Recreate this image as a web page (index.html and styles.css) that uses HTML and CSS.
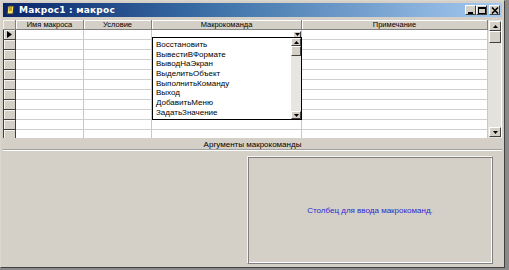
FILE: index.html
```html
<!DOCTYPE html>
<html>
<head>
<meta charset="utf-8">
<link rel="stylesheet" href="styles.css">
</head>
<body>
<div class="window">
  <div class="titlebar">
    <svg class="ticon" width="9" height="10" viewBox="0 0 9 10">
      <path d="M2 1 L8 1 L7 9 L1 9 Z" fill="#f8e060" stroke="#303030" stroke-width="1"/>
      <path d="M3 3 L6 3 M3 5 L6 5" stroke="#806000" stroke-width="1"/>
    </svg>
    <span class="ttext">Макрос1 : макрос</span>
    <div class="tbtns">
      <span class="tbtn"><svg width="8" height="7" viewBox="0 0 8 7"><rect x="1" y="5" width="5" height="2" fill="#000"/></svg></span>
      <span class="tbtn"><svg width="8" height="7" viewBox="0 0 8 7"><rect x="0.5" y="0.5" width="7" height="6" fill="none" stroke="#000"/><rect x="0" y="0" width="8" height="2" fill="#000"/></svg></span>
      <span class="tbtn close"><svg width="8" height="7" viewBox="0 0 8 7"><path d="M1 0.5 L7 6.5 M7 0.5 L1 6.5" stroke="#000" stroke-width="1.6"/></svg></span>
    </div>
  </div>

  <div class="gridarea">
    <div class="grid">
      <div class="hc sel"></div>
      <div class="hc">Имя макроса</div>
      <div class="hc">Условие</div>
      <div class="hc">Макрокоманда</div>
      <div class="hc">Примечание</div>

      <div class="sel cur"><svg width="5" height="7" viewBox="0 0 5 7"><path d="M0 0 L5 3.5 L0 7 Z" fill="#000"/></svg></div>
      <div class="c"></div><div class="c"></div>
      <div class="c combo"><span class="dd"><svg width="5" height="3" viewBox="0 0 5 3"><path d="M0 0 L5 0 L2.5 3 Z" fill="#000"/></svg></span></div>
      <div class="c"></div>

      <div class="sel"></div><div class="c"></div><div class="c"></div><div class="c"></div><div class="c"></div>
      <div class="sel"></div><div class="c"></div><div class="c"></div><div class="c"></div><div class="c"></div>
      <div class="sel"></div><div class="c"></div><div class="c"></div><div class="c"></div><div class="c"></div>
      <div class="sel"></div><div class="c"></div><div class="c"></div><div class="c"></div><div class="c"></div>
      <div class="sel"></div><div class="c"></div><div class="c"></div><div class="c"></div><div class="c"></div>
      <div class="sel"></div><div class="c"></div><div class="c"></div><div class="c"></div><div class="c"></div>
      <div class="sel"></div><div class="c"></div><div class="c"></div><div class="c"></div><div class="c"></div>
      <div class="sel"></div><div class="c"></div><div class="c"></div><div class="c"></div><div class="c"></div>
      <div class="sel"></div><div class="c"></div><div class="c"></div><div class="c"></div><div class="c"></div>
      <div class="sel"></div><div class="c"></div><div class="c"></div><div class="c"></div><div class="c"></div>
      <div class="sel"></div><div class="c"></div><div class="c"></div><div class="c"></div><div class="c"></div>
    </div>

    <div class="vscroll">
      <span class="sbtn"><svg width="5" height="3" viewBox="0 0 5 3"><path d="M0 3 L5 3 L2.5 0 Z" fill="#000"/></svg></span>
      <span class="thumb"></span>
      <span class="track"></span>
      <span class="sbtn"><svg width="5" height="3" viewBox="0 0 5 3"><path d="M0 0 L5 0 L2.5 3 Z" fill="#000"/></svg></span>
    </div>

    <div class="droplist">
      <ul class="items">
        <li>Восстановить</li>
        <li>ВывестиВФормате</li>
        <li>ВыводНаЭкран</li>
        <li>ВыделитьОбъект</li>
        <li>ВыполнитьКоманду</li>
        <li>Выход</li>
        <li>ДобавитьМеню</li>
        <li>ЗадатьЗначение</li>
      </ul>
      <div class="lscroll">
        <span class="sbtn small"><svg width="5" height="3" viewBox="0 0 5 3"><path d="M0 3 L5 3 L2.5 0 Z" fill="#000"/></svg></span>
        <span class="thumb small"></span>
        <span class="track"></span>
        <span class="sbtn small"><svg width="5" height="3" viewBox="0 0 5 3"><path d="M0 0 L5 0 L2.5 3 Z" fill="#000"/></svg></span>
      </div>
    </div>
  </div>

  <div class="argbar">Аргументы макрокоманды</div>

  <div class="lower">
    <div class="leftpane"></div>
    <div class="hintbox">Столбец для ввода макрокоманд.</div>
  </div>
</div>
</body>
</html>
```

FILE: styles.css
```css
* { box-sizing: border-box; }
html, body { margin: 0; padding: 0; }
body {
  width: 509px;
  height: 270px;
  background: #8a8a8a;
  font-family: "Liberation Sans", Arial, sans-serif;
  font-size: 8px;
  overflow: hidden;
}
.window {
  width: 505px;
  height: 268px;
  background: #d4d0c8;
  border: 1px solid;
  border-color: #dcd8d0 #404040 #404040 #dcd8d0;
  padding: 2px 2px 0 2px;
  display: flex;
  flex-direction: column;
}
.titlebar {
  height: 14px;
  flex: none;
  background: linear-gradient(to right, #0a246a, #3a6ea5 40%, #a6caf0);
  display: flex;
  align-items: center;
  padding: 0 2px 0 3px;
  color: #fff;
}
.ticon { flex: none; margin-right: 4px; }
.ttext {
  font-weight: bold;
  font-size: 9px;
  font-family: "DejaVu Sans", sans-serif;
  letter-spacing: 0.2px;
}
.tbtns { margin-left: auto; display: flex; gap: 0; }
.tbtn {
  width: 11px;
  height: 10px;
  background: #d4d0c8;
  border: 1px solid;
  border-color: #fff #404040 #404040 #fff;
  display: flex;
  align-items: center;
  justify-content: center;
}
.tbtn.close { margin-left: 2px; }

.gridarea {
  margin-top: 3px;
  height: 118px;
  flex: none;
  position: relative;
  display: flex;
  background: #fff;
  overflow: hidden;
}
.grid {
  display: grid;
  grid-template-columns: 13px 68px 68px 150px 186px;
  grid-auto-rows: 10px;
  align-content: start;
}
.hc {
  background: #d4d0c8;
  border-right: 1px solid #808080;
  border-bottom: 1px solid #808080;
  box-shadow: inset 1px 1px 0 #fff;
  display: flex;
  align-items: center;
  justify-content: center;
  color: #000;
  font-size: 7.5px;
  line-height: 1;
}
.sel {
  background: #d4d0c8;
  border: 1px solid #404040;
  border-top: none;
  box-shadow: inset 1px 1px 0 #f4f4f0;
  display: flex;
  align-items: center;
  justify-content: center;
}
.hc.sel { border-color: #808080; border-left: none; }
.c {
  border-right: 1px solid #c8c8c8;
  border-bottom: 1px solid #d0d0d0;
  background: #fff;
}
.combo { display: flex; justify-content: flex-end; align-items: center; }
.dd {
  width: 8px;
  height: 7px;
  background: #d4d0c8;
  border: 1px solid;
  border-color: #fff #404040 #404040 #fff;
  display: flex;
  align-items: center;
  justify-content: center;
}
.vscroll {
  width: 13px;
  flex: none;
  background: #e4e2dc;
  display: flex;
  flex-direction: column;
  padding: 1px 0 1px 1px;
}
.sbtn {
  flex: none;
  height: 10px;
  background: #d4d0c8;
  border: 1px solid;
  border-color: #fff #404040 #404040 #fff;
  display: flex;
  align-items: center;
  justify-content: center;
}
.thumb {
  flex: none;
  height: 12px;
  background: #d4d0c8;
  border: 1px solid;
  border-color: #fff #404040 #404040 #fff;
}
.track { flex: 1; }
.droplist {
  position: absolute;
  left: 149px;
  top: 17px;
  width: 150px;
  height: 83px;
  background: #fff;
  border: 1px solid #000;
  display: flex;
}
.items {
  list-style: none;
  margin: 0;
  padding: 2px 0 0 3px;
  flex: 1;
}
.items li {
  height: 9.7px;
  line-height: 9.7px;
  font-size: 8px;
  color: #000;
  white-space: nowrap;
}
.lscroll {
  width: 10px;
  flex: none;
  background: #e8e6e0;
  display: flex;
  flex-direction: column;
}
.sbtn.small { height: 8px; }
.thumb.small { height: 10px; }

.argbar {
  height: 12px;
  flex: none;
  text-align: center;
  line-height: 14px;
  font-size: 8px;
  color: #000;
  border-bottom: 1px solid #a0a0a0;
  box-shadow: 0 1px 0 #fff;
}
.lower {
  flex: 1;
  display: flex;
  padding: 6px 9px 3px 0;
}
.leftpane { width: 244px; flex: none; }
.hintbox {
  flex: 1;
  border: 1px solid;
  border-color: #f4f4f0 #808080 #808080 #f4f4f0;
  box-shadow: inset 1px 1px 0 #808080, inset -1px -1px 0 #fff;
  display: flex;
  align-items: center;
  justify-content: center;
  color: #2a2ad0;
  font-size: 8px;
}
```
